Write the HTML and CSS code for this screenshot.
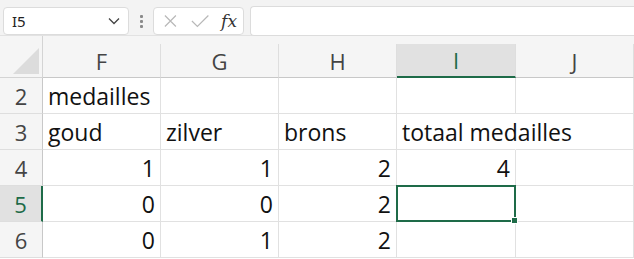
FILE: index.html
```html
<!DOCTYPE html>
<html lang="nl">
<head>
    <meta charset="UTF-8">
    <title>Medailles</title>
    <link rel="stylesheet" href="styles.css">
</head>
<body>
    <div class="toolbar">
        <div class="namebox">
            <span>I5</span>
            <svg class="chevron" width="12" height="8" viewBox="0 0 12 8"><path d="M1 1.5 L6 6.5 L11 1.5" fill="none" stroke="#444" stroke-width="1.3"/></svg>
        </div>
        <div class="grip"><i></i><i></i><i></i></div>
        <div class="fxbox">
            <svg width="14" height="14" viewBox="0 0 14 14"><path d="M1 1 L13 13 M13 1 L1 13" stroke="#b8b8b8" stroke-width="1.3"/></svg>
            <svg width="20" height="14" viewBox="0 0 20 14"><path d="M1 7 L7 13 L19 1" fill="none" stroke="#b8b8b8" stroke-width="1.3"/></svg>
            <span class="fx">fx</span>
        </div>
        <div class="formula"></div>
    </div>

    <div class="sheet">
        <div class="corner"><span class="tri"></span></div>
        <div class="colhead">F</div>
        <div class="colhead">G</div>
        <div class="colhead">H</div>
        <div class="colhead active">I</div>
        <div class="colhead">J</div>

        <div class="rowhead">2</div>
        <div class="cell">medailles</div>
        <div class="cell"></div>
        <div class="cell"></div>
        <div class="cell"></div>
        <div class="cell"></div>

        <div class="rowhead">3</div>
        <div class="cell">goud</div>
        <div class="cell">zilver</div>
        <div class="cell">brons</div>
        <div class="cell overflow">totaal medailles</div>
        <div class="cell"></div>

        <div class="rowhead">4</div>
        <div class="cell num">1</div>
        <div class="cell num">1</div>
        <div class="cell num">2</div>
        <div class="cell num">4</div>
        <div class="cell"></div>

        <div class="rowhead active">5</div>
        <div class="cell num">0</div>
        <div class="cell num">0</div>
        <div class="cell num">2</div>
        <div class="cell selected"><span class="handle"></span></div>
        <div class="cell"></div>

        <div class="rowhead">6</div>
        <div class="cell num">0</div>
        <div class="cell num">1</div>
        <div class="cell num">2</div>
        <div class="cell"></div>
        <div class="cell"></div>
    </div>
</body>
</html>
```

FILE: styles.css
```css
/* page */
body {
  margin: 0;
  background: #ffffff;
  font-family: "Open Sans", "Noto Sans", sans-serif;
  overflow: hidden;
}

/* formula bar */
.toolbar {
  display: flex;
  align-items: center;
  height: 36px;
  padding: 7px 0 0 3px;
  box-sizing: border-box;
  background: #f3f3f3;
  border-bottom: 1px solid #e2e2e2;
}

.namebox {
  display: flex;
  align-items: center;
  justify-content: space-between;
  width: 126px;
  height: 28px;
  box-sizing: border-box;
  padding: 0 8px 0 8px;
  background: #fff;
  border: 1px solid #dcdcdc;
  border-radius: 4px;
  font-family: "Noto Sans", sans-serif;
  font-size: 15px;
  color: #222;
}

.grip {
  display: flex;
  flex-direction: column;
  gap: 2px;
  margin: 0 10px 0 11px;
}

.grip i {
  display: block;
  width: 3px;
  height: 3px;
  background: #8a8a8a;
  border-radius: 1px;
}

.fxbox {
  display: flex;
  align-items: center;
  gap: 14px;
  width: 91px;
  height: 28px;
  box-sizing: border-box;
  padding: 0 6px 0 10px;
  background: #fff;
  border: 1px solid #dcdcdc;
  border-radius: 4px;
}

.fx {
  font-family: "DejaVu Serif", "Liberation Serif", serif;
  font-style: italic;
  font-size: 17px;
  color: #333;
  margin-left: -2px;
}

.formula {
  flex: 1;
  height: 28px;
  margin-left: 6px;
  background: #fff;
  border: 1px solid #dcdcdc;
  border-right: none;
  border-radius: 4px 0 0 4px;
}

/* grid */
.sheet {
  display: grid;
  grid-template-columns: 43px 118px 118px 118px 119px 118px;
  grid-template-rows: 42px repeat(5, 36px);
  background: #f5f5f5;
}

.corner {
  position: relative;
  border-right: 1px solid #d4d4d4;
  border-bottom: 1px solid #d4d4d4;
}

.tri {
  position: absolute;
  right: 3px;
  bottom: 3px;
  width: 0;
  height: 0;
  border-left: 26px solid transparent;
  border-bottom: 26px solid #dcdcdc;
}

.colhead {
  display: flex;
  align-items: center;
  justify-content: center;
  margin-top: 8px;
  border-right: 1px solid #dedede;
  border-bottom: 1px solid #c8c8c8;
  font-size: 22px;
  color: #444;
}

.colhead.active {
  background: #e1e1e1;
  color: #1e6b48;
  border-bottom: 2px solid #1e6b48;
}

.rowhead {
  display: flex;
  align-items: center;
  justify-content: center;
  border-right: 1px solid #c8c8c8;
  border-bottom: 1px solid #dedede;
  font-size: 22px;
  color: #444;
}

.rowhead.active {
  background: #e1e1e1;
  color: #1e6b48;
  border-right: 2px solid #1e6b48;
}

.cell {
  position: relative;
  display: flex;
  align-items: center;
  padding: 0 5px;
  background: #fff;
  border-right: 1px solid #e1e1e1;
  border-bottom: 1px solid #e1e1e1;
  font-size: 23px;
  color: #111;
  white-space: nowrap;
}

.cell.num {
  justify-content: flex-end;
}

.cell.overflow {
  overflow: visible;
  z-index: 1;
  border-right-color: transparent;
}

.cell.selected {
  margin: -1px 0 0 -1px;
  border: 2px solid #1e6b48;
  z-index: 2;
}

.handle {
  position: absolute;
  right: -4px;
  bottom: -4px;
  width: 5px;
  height: 5px;
  background: #1e6b48;
  border: 1px solid #fff;
}
```
